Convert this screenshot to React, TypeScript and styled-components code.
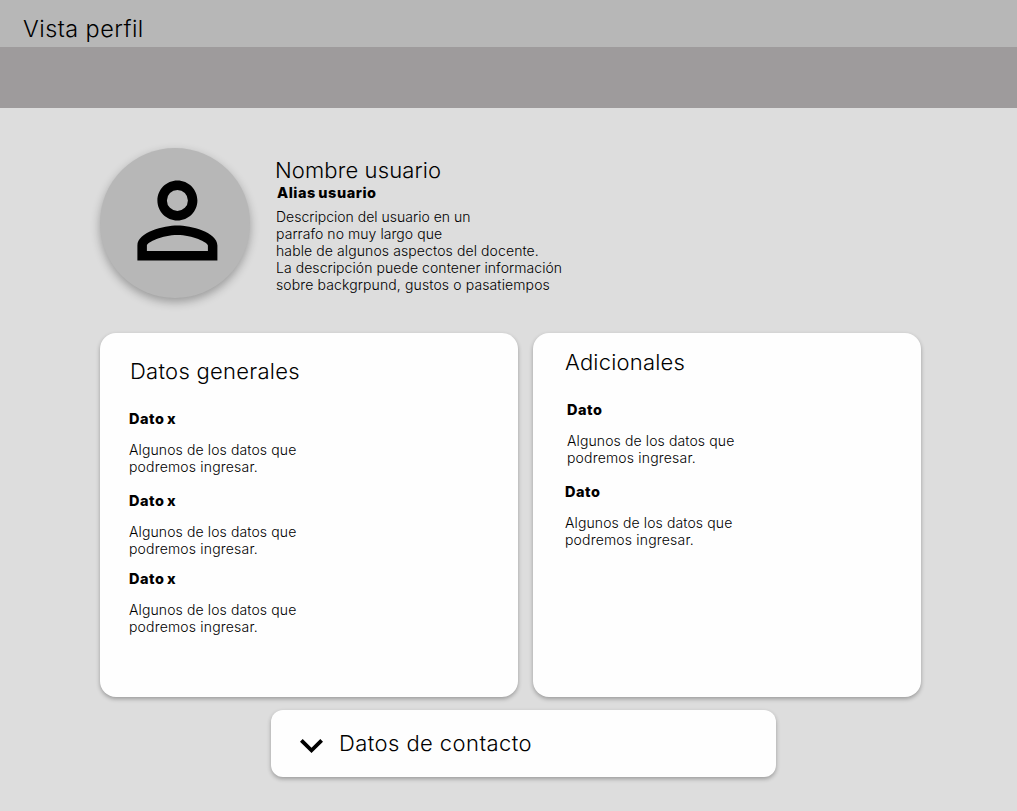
import React from "react";
import styled, { createGlobalStyle } from "styled-components";

const GlobalStyle = createGlobalStyle`
  * { box-sizing: border-box; margin: 0; }
  body { margin: 0; background: #dddddd; color: #000; font-family: Inter, sans-serif; font-weight: 300; }
`;

const Page = styled.div`
  min-height: 811px;
  background: #dddddd;
`;

const TopBar = styled.header`
  height: 47px;
  padding: 14px 0 0 23px;
  background: #b7b7b7;
`;

const PageTitle = styled.h1`
  font-size: 23.4px;
  line-height: 29px;
  font-weight: 300;
  letter-spacing: 0.46px;
`;

const Banner = styled.div`
  height: 61px;
  background: #9e9b9c;
`;

const Main = styled.main`
  padding: 40px 96px 0 100px;
`;

const Profile = styled.section`
  display: flex;
  height: 185px;
`;

const Avatar = styled.div`
  display: flex;
  width: 150px;
  height: 150px;
  padding: 12px 0 0 17px;
  border-radius: 50%;
  background: #b7b7b7;
  box-shadow: 0 4px 10px rgba(0, 0, 0, 0.3);
`;

const Summary = styled.div`
  padding: 9px 0 0 25px;
`;

const Heading = styled.h2<{ $space: number; $indent?: number }>`
  padding-left: ${({ $indent = 0 }) => $indent}px;
  font-size: 22px;
  line-height: 27px;
  font-weight: 300;
  letter-spacing: ${({ $space }) => $space}px;
`;

const Label = styled.h3<{ $indent?: number }>`
  padding-left: ${({ $indent = 0 }) => $indent}px;
  font-size: 14.5px;
  line-height: 17px;
  font-weight: 850;
  letter-spacing: 0.53px;
  word-spacing: -1.2px;
`;

const Text = styled.div`
  font-size: 14px;
  line-height: 17px;
  white-space: nowrap;
`;

const Line = styled.p<{ $space: number }>`
  letter-spacing: ${({ $space }) => $space}px;
`;

const Description = styled(Text)`
  padding: 7px 0 0 1px;
`;

const Cards = styled.div`
  display: flex;
  gap: 15px;
`;

const Card = styled.section<{ $width: number; $top: number; $left: number }>`
  width: ${({ $width }) => $width}px;
  height: 364px;
  padding: ${({ $top, $left }) => `${$top}px 0 0 ${$left}px`};
  border-radius: 16px;
  background: #fefefe;
  box-shadow: 0 2px 4px rgba(0, 0, 0, 0.3);
`;

const Entry = styled.article<{ $gap: number; $indent?: number }>`
  padding: ${({ $gap, $indent = 0 }) => `${$gap}px 0 0 ${$indent}px`};

  ${Text} { margin-top: 14px; }
`;

const Contact = styled.section`
  display: flex;
  width: 505px;
  height: 67px;
  margin: 13px 0 0 171px;
  padding: 20px 0 0 29px;
  border-radius: 12px;
  background: #fefefe;
  box-shadow: 0 2px 4px rgba(0, 0, 0, 0.3);
`;

const Chevron = styled.svg`
  width: 23px;
  height: 14px;
  margin: 9px 16px 0 0;
`;

const description = [
  { text: "Descripcion del usuario en un", space: 0.01 },
  { text: "parrafo no muy largo que", space: 0.06 },
  { text: "hable de algunos aspectos del docente.", space: 0.1 },
  { text: "La descripción puede contener información", space: 0.06 },
  { text: "sobre backgrpund, gustos o pasatiempos", space: 0.12 },
];

const sample = [
  { text: "Algunos de los datos que", space: 0.11 },
  { text: "podremos ingresar.", space: 0.18 },
];

const general = [
  { label: "Dato x", gap: 25 },
  { label: "Dato x", gap: 17 },
  { label: "Dato x", gap: 13 },
];

const extra = [
  { label: "Dato", gap: 25, indent: 2 },
  { label: "Dato", gap: 17, indent: 0 },
];

function Lines({ items }: { items: { text: string; space: number }[] }) {
  return (
    <>
      {items.map((line) => (
        <Line key={line.text} $space={line.space}>{line.text}</Line>
      ))}
    </>
  );
}

function Entries({ items }: { items: { label: string; gap: number; indent?: number }[] }) {
  return (
    <>
      {items.map((item, i) => (
        <Entry key={i} $gap={item.gap} $indent={item.indent}>
          <Label>{item.label}</Label>
          <Text><Lines items={sample} /></Text>
        </Entry>
      ))}
    </>
  );
}

export default function App() {
  return (
    <Page>
      <GlobalStyle />
      <TopBar>
        <PageTitle>Vista perfil</PageTitle>
      </TopBar>
      <Banner />
      <Main>
        <Profile>
          <Avatar>
            <svg width="120" height="120" viewBox="-0.08 -0.08 24 24" aria-hidden="true">
              <path d="M12 5.9a2.1 2.1 0 1 1 0 4.2 2.1 2.1 0 0 1 0-4.2m0 9c2.97 0 6.1 1.46 6.1 2.1v1.1H5.9V17c0-.64 3.13-2.1 6.1-2.1M12 4C9.79 4 8 5.79 8 8s1.79 4 4 4 4-1.79 4-4-1.79-4-4-4zm0 9c-2.67 0-8 1.34-8 4v3h16v-3c0-2.66-5.33-4-8-4z" />
            </svg>
          </Avatar>
          <Summary>
            <Heading $space={0.13}>Nombre usuario</Heading>
            <Label $indent={2}>Alias usuario</Label>
            <Description><Lines items={description} /></Description>
          </Summary>
        </Profile>
        <Cards>
          <Card $width={418} $top={25} $left={29}>
            <Heading $space={0.27} $indent={1}>Datos generales</Heading>
            <Entries items={general} />
          </Card>
          <Card $width={388} $top={16} $left={32}>
            <Heading $space={0.2}>Adicionales</Heading>
            <Entries items={extra} />
          </Card>
        </Cards>
        <Contact>
          <Chevron viewBox="6 8.59 12 7.41" preserveAspectRatio="none" aria-hidden="true">
            <path d="M16.59 8.59 12 13.17 7.41 8.59 6 10l6 6 6-6z" />
          </Chevron>
          <Heading $space={0.42}>Datos de contacto</Heading>
        </Contact>
      </Main>
    </Page>
  );
}
